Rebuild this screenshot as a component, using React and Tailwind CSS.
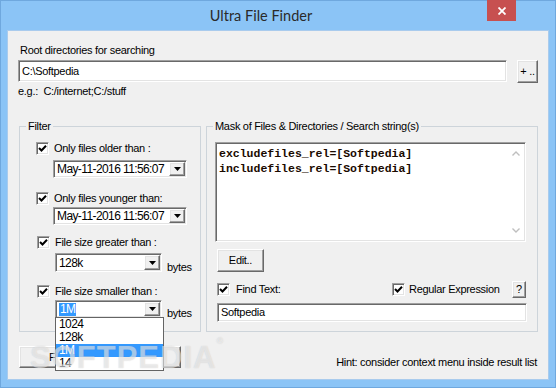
import React from "react";

const sans = "font-['Liberation_Sans',Arial,sans-serif]";
const sunken =
  "bg-white border border-t-[#a0a0a0] border-l-[#a0a0a0] border-r-white border-b-white shadow-[inset_1px_1px_0_#696969,inset_-1px_-1px_0_#e3e3e3]";
const raised =
  "bg-[#f0f0f0] border border-t-white border-l-white border-r-[#696969] border-b-[#696969] shadow-[inset_-1px_-1px_0_#a0a0a0,inset_1px_1px_0_#e3e3e3]";

const Check = () => (
  <span className={`flex h-[13px] w-[13px] shrink-0 items-center justify-center ${sunken}`}>
    <svg width="9" height="9" viewBox="0 0 9 9">
      <path d="M1 4 L3.5 6.5 L8 1.8" fill="none" stroke="#000" strokeWidth="2" />
    </svg>
  </span>
);

const Arrow = () => (
  <svg width="7" height="4" viewBox="0 0 7 4">
    <path d="M0 0H7L3.5 4Z" fill="#000" />
  </svg>
);

const Combo = ({ className, children, list }) => (
  <div className={`relative flex p-[1px] ${sunken} ${className}`}>
    <div className="flex flex-1 items-center pl-[2px] text-[12px] tracking-[-0.6px]">{children}</div>
    <span className={`flex w-[16px] items-center justify-center ${raised}`}>
      <Arrow />
    </span>
    {list}
  </div>
);

const sizes = ["1024", "128k", "1M", "14"];

export default function App() {
  return (
    <div className={`relative flex h-[388px] w-[556px] flex-col border border-[#6fa8de] bg-[#8bc4f6] ${sans}`}>
      {/* title bar */}
      <div className="relative flex h-[29px] shrink-0">
        <div className="flex-1 pr-[34px] text-center font-['Lato',sans-serif] text-[14.5px] leading-[29px] text-[#2a2a2a]">
          Ultra File Finder
        </div>
        <div className="absolute right-[39px] top-[-1px] flex h-[21px] w-[29px] items-center justify-center bg-[#c75050]">
          <svg width="8" height="8" viewBox="0 0 8 8">
            <path d="M0.5 0.5L7.5 7.5M7.5 0.5L0.5 7.5" stroke="#fff" strokeWidth="1.8" />
          </svg>
        </div>
      </div>

      {/* client area */}
      <div className="mx-[6px] mb-[7px] flex flex-1 flex-col border border-[#a9cbed] bg-[#f0f0f0] pl-[10px] text-[11px] tracking-[-0.3px] text-black">
        <div className="ml-[2px] mt-[13px] h-[13px] leading-[13px]">Root directories for searching</div>
        <div className="mt-[3px] flex items-start">
          <div className={`flex h-[22px] w-[489px] items-center pl-[3px] ${sunken}`}>C:\Softpedia</div>
          <div className={`ml-[10px] flex h-[23px] w-[21px] items-center justify-center ${raised}`}>+ ..</div>
        </div>
        <div className="mt-[2px] h-[13px] whitespace-pre leading-[13px]">e.g.:  C:/internet;C:/stuff</div>

        <div className="ml-[1px] mt-[22px] flex">
          {/* Filter group */}
          <fieldset className="h-[212px] w-[182px] border border-[#cdd4da]">
            <legend className="ml-[6px] px-[2px] leading-[13px]">Filter</legend>
            <div className="ml-[16px] mt-[9px] flex h-[13px] items-center">
              <Check />
              <span className="ml-[5px] leading-[13px]">Only files older than :</span>
            </div>
            <Combo className="ml-[33px] mt-[5px] h-[18px] w-[134px]">May-11-2016 11:56:07</Combo>
            <div className="ml-[16px] mt-[14px] flex h-[13px] items-center">
              <Check />
              <span className="ml-[5px] leading-[13px]">Only files younger than:</span>
            </div>
            <Combo className="ml-[33px] mt-[2px] h-[18px] w-[134px]">May-11-2016 11:56:07</Combo>
            <div className="ml-[17px] mt-[11px] flex h-[13px] items-center">
              <Check />
              <span className="ml-[5px] leading-[13px]">File size greater than :</span>
            </div>
            <div className="ml-[35px] mt-[4px] flex items-end">
              <Combo className="h-[19px] w-[107px]">128k</Combo>
              <span className="mb-[-2px] ml-[5px] leading-[13px]">bytes</span>
            </div>
            <div className="ml-[17px] mt-[13px] flex h-[13px] items-center">
              <Check />
              <span className="ml-[5px] leading-[13px]">File size smaller than :</span>
            </div>
            <div className="ml-[35px] mt-[2px] flex items-end">
              <Combo
                className="z-10 h-[18px] w-[107px]"
                list={
                  <div className="absolute left-[-1px] top-full w-[109px] border border-[#646464] bg-white text-[12px] tracking-[-0.6px]">
                    {sizes.map((s) => (
                      <div
                        key={s}
                        className={`h-[13px] pl-[3px] leading-[13px] ${s === "1M" ? "bg-[#3399ff] text-white" : ""}`}
                      >
                        {s}
                      </div>
                    ))}
                  </div>
                }
              >
                <span className="bg-[#3399ff] px-[1px] leading-[13px] text-white">1M</span>
              </Combo>
              <span className="mb-[-2px] ml-[5px] leading-[13px]">bytes</span>
            </div>
          </fieldset>

          {/* Mask group */}
          <fieldset className="ml-[5px] h-[212px] w-[332px] border border-[#cdd4da]">
            <legend className="ml-[6px] px-[2px] leading-[13px]">Mask of Files &amp; Directories / Search string(s)</legend>
            <div className={`ml-[8px] mt-[9px] flex h-[100px] w-[311px] p-[1px] ${sunken}`}>
              <div className="flex-1 pl-[2px] pt-[2px] font-['Liberation_Mono',monospace] text-[11.5px] font-bold leading-[15px] tracking-[0px] text-[#1a0a00]">
                <div>excludefiles_rel=[Softpedia]</div>
                <div>includefiles_rel=[Softpedia]</div>
              </div>
              <div className="flex w-[17px] flex-col items-center justify-between py-[7px]">
                <svg width="8" height="5" viewBox="0 0 8 5">
                  <path d="M0.5 4.5L4 1L7.5 4.5" fill="none" stroke="#bfbfbf" strokeWidth="1.4" />
                </svg>
                <svg width="8" height="5" viewBox="0 0 8 5">
                  <path d="M0.5 0.5L4 4L7.5 0.5" fill="none" stroke="#bfbfbf" strokeWidth="1.4" />
                </svg>
              </div>
            </div>
            <div className={`ml-[10px] mt-[7px] flex h-[23px] w-[47px] items-center justify-center ${raised}`}>Edit..</div>
            <div className="ml-[10px] mt-[9px] flex h-[17px] w-[310px] items-center">
              <div className="flex w-[175px] items-center">
                <Check />
                <span className="ml-[6px] leading-[13px]">Find Text:</span>
              </div>
              <Check />
              <span className="ml-[4px] w-[103px] leading-[13px]">Regular Expression</span>
              <div className={`flex h-[17px] w-[14px] items-center justify-center ${raised}`}>?</div>
            </div>
            <div className={`ml-[10px] mt-[5px] flex h-[19px] w-[310px] items-center pl-[3px] ${sunken}`}>Softpedia</div>
          </fieldset>
        </div>

        <div className="mt-[14px] flex items-end pr-[11px]">
          <div className={`ml-[1px] flex h-[22px] w-[162px] items-center justify-center ${raised}`}>Find Files / Directories</div>
          <div className="mb-[-1px] ml-auto leading-[13px]">Hint: consider context menu inside result list</div>
        </div>
      </div>

      {/* watermark */}
      <div className="pointer-events-none absolute left-[29px] top-[334px] z-20 text-[31px] font-bold tracking-[1px] text-white/50 [text-shadow:0_0_1px_rgba(120,120,120,0.35)]">
        SOFTPEDIA<span className="align-top text-[9px]">®</span>
      </div>
    </div>
  );
}
